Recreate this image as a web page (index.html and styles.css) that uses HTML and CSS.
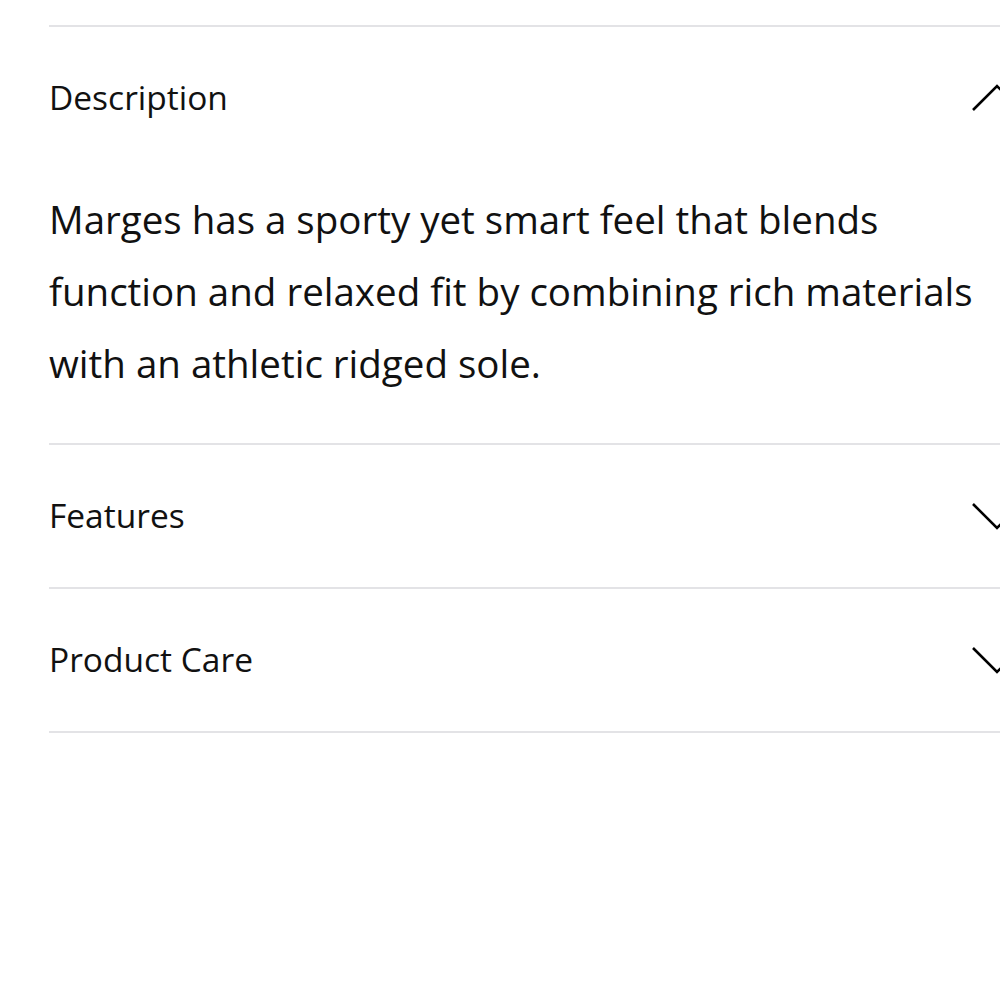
FILE: index.html
```html
<!DOCTYPE html>
<html lang="en">
<head>
    <meta charset="UTF-8">
    <meta name="viewport" content="width=device-width, initial-scale=1.0">
    <title>Product details</title>
    <link rel="stylesheet" href="styles.css">
</head>
<body>
    <div class="details">
        <div class="item open">
            <div class="item-head">
                <span class="item-title">Description</span>
                <svg class="chevron" width="56" height="32" viewBox="0 0 56 32">
                    <polyline points="2,28 26,4 50,28" fill="none" stroke="#000" stroke-width="2.6"/>
                </svg>
            </div>
            <p class="item-body">Marges has a sporty yet smart feel that blends function and relaxed fit by combining rich materials with an athletic ridged sole.</p>
        </div>

        <div class="item">
            <div class="item-head">
                <span class="item-title">Features</span>
                <svg class="chevron" width="56" height="32" viewBox="0 0 56 32">
                    <polyline points="2,4 26,28 50,4" fill="none" stroke="#000" stroke-width="2.6"/>
                </svg>
            </div>
        </div>

        <div class="item">
            <div class="item-head">
                <span class="item-title">Product Care</span>
                <svg class="chevron" width="56" height="32" viewBox="0 0 56 32">
                    <polyline points="2,4 26,28 50,4" fill="none" stroke="#000" stroke-width="2.6"/>
                </svg>
            </div>
        </div>
    </div>
</body>
</html>
```

FILE: styles.css
```css
html, body {
    margin: 0;
    padding: 0;
    background-color: #ffffff;
    overflow: hidden;
}

body {
    font-family: 'Open Sans', 'Noto Sans', sans-serif;
    color: #111;
}

.details {
    margin: 25px 0 0 49px;
    width: 1000px;
    border-bottom: 2px solid #e3e3e6;
}

.item {
    border-top: 2px solid #e3e3e6;
}

.item-head {
    height: 142px;
    display: flex;
    align-items: center;
    justify-content: space-between;
}

.item-title {
    font-size: 33.5px;
    margin-top: -3px;
}

.chevron {
    margin-right: 22px;
}

.item-body {
    margin: 14px 0 0;
    padding-bottom: 44px;
    font-size: 38.5px;
    line-height: 72px;
    max-width: 935px;
}
```
